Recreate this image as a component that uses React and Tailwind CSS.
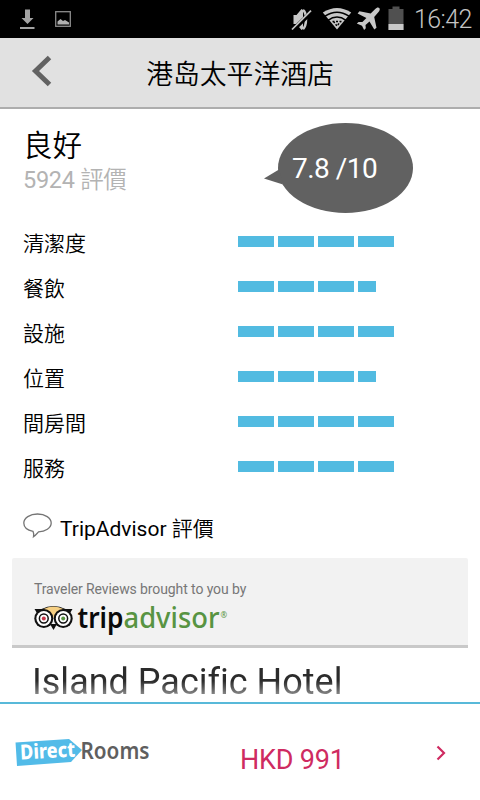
import React from 'react';

const FONT = "font-[Roboto,'Noto_Sans_CJK_TC',sans-serif]";

const RATINGS = [
  { label: '清潔度', bars: 4 },
  { label: '餐飲', bars: 3.5 },
  { label: '設施', bars: 4 },
  { label: '位置', bars: 3.5 },
  { label: '間房間', bars: 4 },
  { label: '服務', bars: 4 },
];

function StatusBar() {
  return (
    <div className="h-[38px] bg-black flex items-center justify-between pl-[19px] pr-[9px] shrink-0">
      <svg width="54" height="38" viewBox="0 0 54 38">
        <path d="M6 9.500h5v8.500h3.500L8.500 24 2.500 18H6z" fill="#a3a3a3" />
        <path d="M1 27h14.500v2H1z" fill="#a3a3a3" />
        <rect x="36.700" y="11.700" width="14.600" height="14.600" fill="none" stroke="#8c8c8c" strokeWidth="1.300" />
        <path d="M38.500 24.500v-3l3-2.500 2.500 2 2-1 4 2.500v2z" fill="#b0b0b0" />
      </svg>
      <div className="flex items-center">
        <svg width="118" height="38" viewBox="290 0 118 38" fill="#c8c8c8">
          {/* muted speaker */}
          <path d="M293.500 15h3l5-6 1.500 1v19l-1.500 1-5-6h-3z" />
          <path d="M303 10c4 3 4 15 0 19" fill="none" stroke="#c8c8c8" strokeWidth="2.500" />
          <path d="M292.500 30.500 312 11.500" stroke="#000" strokeWidth="4.500" />
          <path d="M292 29.500 311 10.700" stroke="#c8c8c8" strokeWidth="1.700" />
          {/* wifi */}
          <path d="M337 29.500 322.800 12.500Q337 3.500 351.200 12.500z" />
          <path d="M325 16.200Q337 8.200 349 16.200M328 20.300Q337 13.800 346 20.300" fill="none" stroke="#000" strokeWidth="1.500" />
          <path d="M332.500 21.500h9M333.500 21.500l3.500 4.500 3.500-4.500" fill="none" stroke="#000" strokeWidth="1.500" strokeDasharray="2 1.500" />
          {/* airplane */}
          <path d="M379.300 8c1 1 .3 2.800-1 4.300l-4.100 4.600 2.300 10.800-2.200 1.800-4.800-8.100-4 3.700.3 3.200-1.700 1.700-2.100-4.300-5.200-2.200 1.800-1.600 3.800.2 4-4-8.800-4.700 1.900-2.200 11.200 2.200 4.500-4.300C376.500 7.500 378.300 7 379.300 8z" />
          {/* battery */}
          <path d="M392.500 6.500h7V9h4v21h-15V9h4z" fill="#505050" />
          <path d="M388.500 24h15v6h-15z" />
        </svg>
        <span className="ml-[6px] w-[57px] text-[25px] leading-[38px] text-[#c4c4c4] font-light tracking-[-0.6px] whitespace-nowrap pt-[2px]">16:42</span>
      </div>
    </div>
  );
}

function Header() {
  return (
    <header className="h-[71px] bg-[#e1e1e1] border-b-2 border-[#adadad] grid grid-cols-[84px_1fr_84px] items-center shrink-0">
      <svg className="ml-[31px] -mt-[4px]" width="22" height="32" viewBox="0 0 22 32">
        <path d="M18.500 2.500 4.500 16l14 13.500" fill="none" stroke="#626262" strokeWidth="5" />
      </svg>
      <h1 className="text-center text-[26.800px] leading-[32px] pt-[5px] font-[350] font-[Roboto,'Noto_Sans_CJK_SC',sans-serif]">港岛太平洋酒店</h1>
    </header>
  );
}

function ScoreBubble() {
  return (
    <div className="relative w-[149px] h-[90px] mt-[14px]">
      <svg width="149" height="90" viewBox="0 0 149 90" fill="#616161">
        <ellipse cx="81.500" cy="45" rx="67.500" ry="45" />
        <path d="M0 55.500 15 46.500 19 61.500z" />
      </svg>
      <span className="absolute left-[28px] top-[29px] text-[28px] leading-[34px] tracking-[-0.5px] text-white whitespace-nowrap">7.8 /10</span>
    </div>
  );
}

function RatingRow({ label, bars }) {
  return (
    <div className="h-[45px] flex items-center">
      <span className="w-[215px] text-[21px] leading-[30px] pt-[5px] font-[350]">{label}</span>
      <div className="flex gap-[4px]">
        {[0, 1, 2, 3].map((i) => (
          <div
            key={i}
            className={`h-[11px] bg-[#52bbe1] ${bars - i >= 1 ? 'w-[36px]' : 'w-[18px]'}`}
          />
        ))}
      </div>
    </div>
  );
}

function Eye({ cx, color }) {
  return (
    <g>
      <circle cx={cx} cy="14.500" r="9.500" fill="#111" />
      <circle cx={cx} cy="14.500" r="7.400" fill="#fff" />
      <circle cx={cx} cy="14.500" r="4.400" fill="none" stroke="#111" strokeWidth="1.500" />
      <circle cx={cx} cy="14.500" r="2" fill={color} />
    </g>
  );
}

function TripAdvisorLogo() {
  return (
    <svg width="200" height="36" viewBox="0 0 200 36" className="block overflow-visible">
      <path d="M.5 5h7Q19.500-1 31.500 5h7l-3 5h-32z" fill="#111" />
      <path d="M9 5.200Q19.500 0 30 5.200 22 7 19.500 14 17 7 9 5.200z" fill="#f5cf83" />
      <path d="m16 20 3.500 6L23 20z" fill="#111" />
      <Eye cx="9.800" color="#c8384b" />
      <Eye cx="29.200" color="#589442" />
      <g fontFamily="'Noto Sans', sans-serif" fontSize="29">
        <text x="43.500" y="23.500" fontWeight="600" fill="#0a0a0a" textLength="46" lengthAdjust="spacingAndGlyphs">trip</text>
        <text x="89.500" y="23.500" fontWeight="500" fill="#589442" textLength="96" lengthAdjust="spacingAndGlyphs">advisor</text>
        <text x="186.500" y="14" fontSize="8" fill="#589442">®</text>
      </g>
    </svg>
  );
}

function DirectRoomsLogo() {
  return (
    <svg width="135" height="30" viewBox="0 0 135 30" className="overflow-visible">
      <path d="M.5 4.500 54 1 67 12 56 24 2 28z" fill="#52bbe8" />
      <g fontFamily="'Noto Sans', sans-serif" fontWeight="700">
        <text x="5.500" y="21.500" fontSize="20.500" fontWeight="800" fill="#fff" textLength="55" lengthAdjust="spacingAndGlyphs" transform="rotate(-3 5.500 21.500)">Direct</text>
        <text x="65.500" y="20.500" fontSize="23" fontWeight="600" fill="#5f5f5f" textLength="69" lengthAdjust="spacingAndGlyphs">Rooms</text>
      </g>
    </svg>
  );
}

function App() {
  return (
    <div className={`w-[480px] h-[800px] bg-white text-black flex flex-col overflow-hidden ${FONT}`}>
      <StatusBar />
      <Header />

      <main className="h-[593px] shrink-0">
        <section className="h-[110px] flex justify-between pl-[23px] pr-[67px]">
          <div className="pt-[17px]">
            <h2 className="text-[29.500px] leading-[38px] font-[350] pt-[1px] -mb-[1px]">良好</h2>
            <p className="text-[23.500px] leading-[32px] tracking-[-0.3px] text-[#b3b3b3] whitespace-nowrap">
              5924 <span className="font-[350]">評價</span>
            </p>
          </div>
          <ScoreBubble />
        </section>

        <section className="pl-[23px]">
          {RATINGS.map((r) => (
            <RatingRow key={r.label} label={r.label} bars={r.bars} />
          ))}
        </section>

        {/* TripAdvisor block */}
        <div className="h-[69px] pl-[23px] flex items-center gap-[8px]">
          <svg width="29" height="26" viewBox="0 0 29 26" className="mt-[5px]">
            <path d="M10 18.300C4.500 17.200.8 14 .8 10 .8 4.900 6.900 1 14.500 1s13.700 3.900 13.700 9-6 8.700-12.700 8.900c-1.500 1.600-3.300 3.800-5 4.900.4-1.800.3-3.700-.5-5.500z" fill="none" stroke="#757575" strokeWidth="1.300" />
          </svg>
          <span className="text-[21px] leading-[30px] pt-[10px]">
            TripAdvisor <span className="font-[350]">評價</span>
          </span>
        </div>
        <div className="mx-[12px] h-[90px] bg-[#f2f2f2] border-b-[3px] border-[#c9c9c9] rounded-t-[2px] pl-[22px] pt-[22px]">
          <p className="text-[14px] leading-[18px] tracking-[-0.1px] text-[#777]">Traveler Reviews brought to you by</p>
          <div className="mt-[6px]"><TripAdvisorLogo /></div>
        </div>
        <h2 className="h-[47px] w-[400px] ml-[32px] pt-[13px] text-[36px] leading-[42px] whitespace-nowrap [font-variant-ligatures:none] text-transparent bg-clip-text bg-[linear-gradient(#2b2b2b_70%,#8b8b8b_100%)]">Island Pacific Hotel</h2>
      </main>

      <footer className="flex-1 border-t-2 border-[#58b9d9] flex items-start pl-[15px]">
        <div className="w-[225px] pt-[34px]"><DirectRoomsLogo /></div>
        <span className="w-[196px] pt-[39px] text-[27px] leading-[34px] tracking-[-0.2px] text-[#cf2b61] whitespace-nowrap">HKD 991</span>
        <svg className="mt-[40px]" width="12" height="18" viewBox="0 0 12 18">
          <path d="m1.500 2.500 6.500 6.500-6.500 6.500" fill="none" stroke="#cf2b61" strokeWidth="2.200" />
        </svg>
      </footer>
    </div>
  );
}

export default App;
